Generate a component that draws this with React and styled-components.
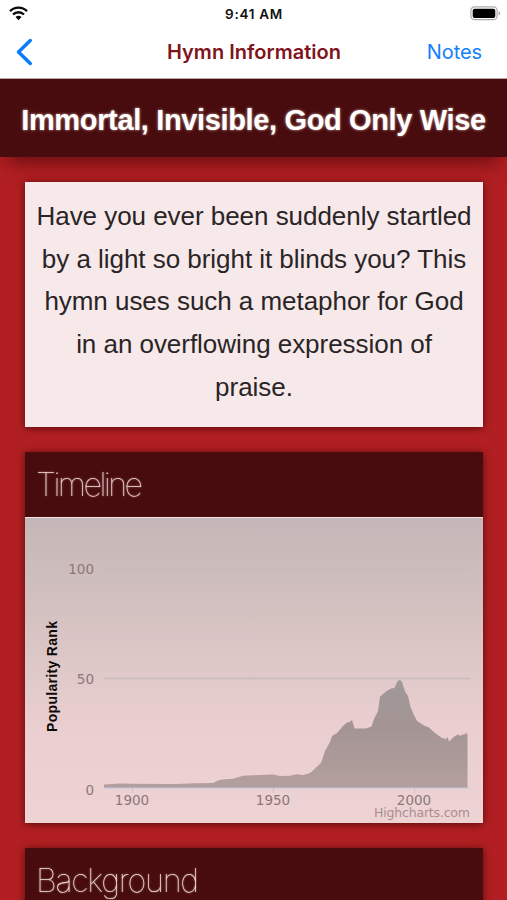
import React from 'react'
import styled, { createGlobalStyle } from 'styled-components'

// #region Styles
const GlobalStyle = createGlobalStyle`
  * {
    box-sizing: border-box;
  }

  body {
    margin: 0;
    background-color: #b21f22;
    font-family: "Liberation Sans", Arial, sans-serif;
  }
`
const Screen = styled.div`
  display: flex;
  flex-direction: column;
  width: 507px;
  height: 900px;
  overflow: hidden;
  background-color: #b21f22;
`
const StatusBar = styled.div`
  display: flex;
  position: relative;
  z-index: 1;
  flex: none;
  justify-content: space-between;
  align-items: center;
  height: 26px;
  padding: 1px 6px 0 9px;
  background-color: white;
`
const Time = styled.span`
  padding-left: 10px;
  font: 600 13.5px/26px Inter, sans-serif;
  letter-spacing: 0.7px;
  color: #111;
`
const NavBar = styled.nav`
  display: grid;
  position: relative;
  z-index: 1;
  flex: none;
  grid-template-columns: 1fr auto 1fr;
  align-items: center;
  height: 53px;
  padding: 0 25px 0 16px;
  border-bottom: 1px solid #b9a9aa;
  background-color: white;
`
const NavTitle = styled.span`
  padding-left: 10px;
  font: 600 20px/52px Inter, sans-serif;
  letter-spacing: 0.02px;
  color: #7f141b;
`
const NavLink = styled.a`
  justify-self: end;
  font: 400 20px/52px Inter, sans-serif;
  letter-spacing: -0.1px;
  color: #1480fa;
`
const HymnTitle = styled.h1`
  flex: none;
  margin: 0;
  height: 78px;
  background-color: #480c0e;
  box-shadow: 0 13px 18px -8px rgba(60, 5, 8, 0.65);
  color: white;
  font-size: 29px;
  font-weight: 700;
  line-height: 82px;
  letter-spacing: -0.36px;
  text-align: center;
  text-shadow: 0 0 3px rgba(255, 225, 210, 0.75);
  white-space: nowrap;
`
const Content = styled.main`
  display: flex;
  flex: none;
  flex-direction: column;
  gap: 25px;
  padding: 25px 24px 0 25px;
`
const Card = styled.section`
  flex: none;
  box-shadow: 0 1px 8px rgba(50, 0, 3, 0.7);
`
const Summary = styled.p`
  margin: 0;
  height: 245px;
  padding: 13px 0 0;
  background-color: #f7e8e9;
  color: #292526;
  font-size: 26px;
  line-height: 42.7px;
  letter-spacing: -0.04px;
  text-align: center;
  white-space: nowrap;
`
const CardHeader = styled.h2`
  margin: 0;
  height: 65px;
  padding-left: 11px;
  background-color: #480c0e;
  color: #f3dcda;
  font: 100 32.5px/65px Inter, sans-serif;
  letter-spacing: ${({ $spacing }) => $spacing};
  text-shadow: 0 0 2px rgba(255, 220, 215, 0.7);
`
// own layer, so the hairline strokes are smoothed in grey
const HeaderText = styled.span`
  display: inline-block;
  will-change: transform;
`
const Chart = styled.svg`
  display: block;
  width: 458px;
  height: 306px;
  border-top: 1px solid #f0e3e2;
  background: linear-gradient(#c5b6b7, #d4c2c1 32%, #ebcfd0 69%, #eed3d4);
`
const AxisLabel = styled.text`
  font: 13.5px "DejaVu Sans", sans-serif;
  fill: #8c7778;
`
const AxisTitle = styled.text`
  font: 700 14px "Liberation Sans", sans-serif;
  fill: #0d0909;
`
const Credits = styled.text`
  font: 12.5px "DejaVu Sans", sans-serif;
  fill: #a78f91;
`
// #endregion

const areaPoints = `104,788 104,784.6 120,783.6 132,783.8 175,784 195,783.3 213,783 218,780.5 222,779.5
  233,778.8 243,775.7 253,775.3 273,774.5 280,776 290,775.8 297,774.3 303,775 308,773.8 311,772.5
  316,767.5 321,763 325,751 330,742 332,736 337,733 343,726 347,722.5 349.5,722 352,720 354.5,728.5
  366,728.5 371.5,726.5 374,719 378,711 380,696.5 386,691.5 391,688.5 394.5,688 397,682 399,680
  401.5,681 403,685 405,691.5 408,696 410.5,707 414,715 417,721 424,725.5 429,727.5 435,733 442,738
  446,739 447.5,737 449,741.5 455,736 458,734.5 461,736 462.5,734 464,735 466,732.5 467.5,735 467.5,788`

const WifiIcon = () => (
  <svg width="19" height="15" viewBox="0 0 19 15">
    <g fill="none" stroke="#0a0a0a" strokeWidth="2.3">
      <path d="M1 5.1a12.1 12.1 0 0 1 17 0" />
      <path d="M4 8.5a7.8 7.8 0 0 1 11 0" />
    </g>
    <path d="M6.5 11.1a4.3 4.3 0 0 1 6 0l-3 3.1z" fill="#0a0a0a" />
  </svg>
)

const BatteryIcon = () => (
  <svg width="31" height="15" viewBox="0 0 31 15">
    <rect x="0.9" y="0.9" width="26.2" height="12.8" rx="3.7" fill="white" stroke="#aaa" strokeWidth="1.2" />
    <rect x="2.7" y="2.7" width="22.6" height="9.2" rx="2" fill="black" />
    <path d="M28.6 5.2c2.2.6 2.2 3.6 0 4.2z" fill="#aaa" />
  </svg>
)

const BackIcon = () => (
  <svg width="18" height="28" viewBox="0 0 18 28">
    <path d="M14.3 2.5 2.5 14l11.8 11.5" fill="none" stroke="#087cfb" strokeWidth="3.4" strokeLinecap="round" strokeLinejoin="round" />
  </svg>
)

const PopularityChart = () => (
  <Chart viewBox="25 518 458 305">
    <defs>
      <linearGradient id="area" x1="0" y1="0" x2="0" y2="1">
        <stop offset="0" stopColor="#a19899" />
        <stop offset="0.45" stopColor="#a49594" />
        <stop offset="1" stopColor="#b39f9e" />
      </linearGradient>
    </defs>

    <path d="M104 568.5H470" stroke="#c4bbbb" opacity="0.6" />
    <path d="M104 678.5H470" stroke="#c5bbbd" strokeWidth="1.3" />
    <polygon points={areaPoints} fill="url(#area)" />
    <path d="M104 788H470M132.5 788v5M273.5 788v5M414.5 788v5" fill="none" stroke="#c0c5d9" strokeWidth="1.2" />

    <AxisLabel x="94" y="574" textAnchor="end">100</AxisLabel>
    <AxisLabel x="94" y="684" textAnchor="end">50</AxisLabel>
    <AxisLabel x="94" y="795" textAnchor="end">0</AxisLabel>
    <AxisLabel x="132" y="805" textAnchor="middle">1900</AxisLabel>
    <AxisLabel x="273" y="805" textAnchor="middle">1950</AxisLabel>
    <AxisLabel x="414" y="805" textAnchor="middle">2000</AxisLabel>
    <AxisTitle transform="translate(56.5 676.5) rotate(-90)" textAnchor="middle" textLength="111">
      Popularity Rank
    </AxisTitle>
    <Credits x="470" y="817" textAnchor="end" textLength="96">
      Highcharts.com
    </Credits>
  </Chart>
)

const App = () => (
  <>
    <GlobalStyle />
    <Screen>
      <StatusBar>
        <WifiIcon />
        <Time>9:41 AM</Time>
        <BatteryIcon />
      </StatusBar>

      <NavBar>
        <BackIcon />
        <NavTitle>Hymn Information</NavTitle>
        <NavLink>Notes</NavLink>
      </NavBar>

      <HymnTitle>Immortal, Invisible, God Only Wise</HymnTitle>

      <Content>
        <Card>
          <Summary>
            Have you ever been suddenly startled
            <br />
            by a light so bright it blinds you? This
            <br />
            hymn uses such a metaphor for God
            <br />
            in an overflowing expression of
            <br />
            praise.
          </Summary>
        </Card>

        <Card>
          <CardHeader $spacing="-2.6px">
            <HeaderText>Timeline</HeaderText>
          </CardHeader>
          <PopularityChart />
        </Card>

        <Card>
          <CardHeader $spacing="-1.3px">
            <HeaderText>Background</HeaderText>
          </CardHeader>
        </Card>
      </Content>
    </Screen>
  </>
)

export default App
